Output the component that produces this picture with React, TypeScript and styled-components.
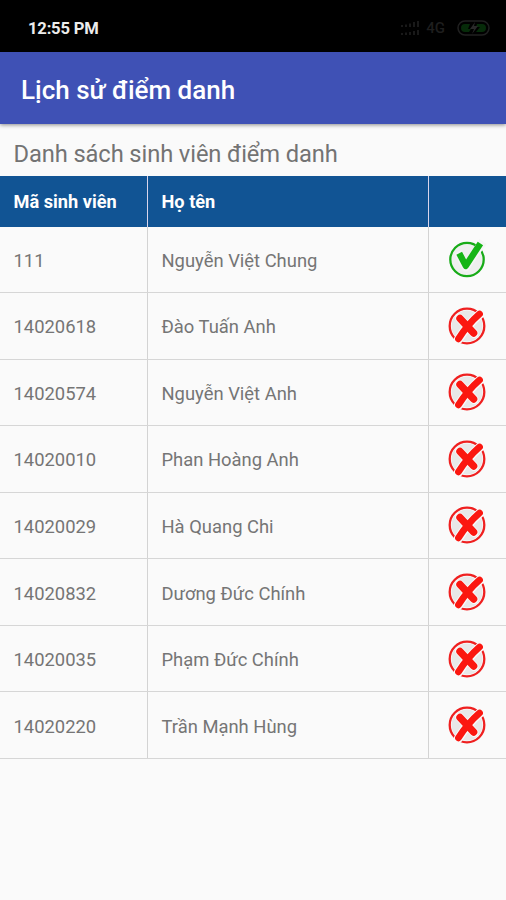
import React from "react";
import styled, { createGlobalStyle } from "styled-components";

const GlobalStyle = createGlobalStyle`
  * { box-sizing: border-box; }
  body {
    margin: 0;
    background: #fafafa;
    font-family: Roboto, "Noto Sans", sans-serif;
  }
`;

const Screen = styled.main`
  width: 100%;
  height: 900px;
  overflow: hidden;
  background: #fafafa;
`;

const StatusBar = styled.header`
  height: 51.5px;
  padding: 5px 15px 0 28px;
  display: flex;
  align-items: center;
  justify-content: space-between;
  background: #000;
`;

const Clock = styled.span`
  color: #ececec;
  font-size: 16.6px;
  font-weight: 700;
  letter-spacing: -0.2px;
`;

const StatusIcons = styled.div`
  display: flex;
  align-items: center;
`;

const Network = styled.span`
  margin: 0 12px 0 5px;
  color: #1e1e1e;
  font-size: 15px;
  font-weight: 500;
`;

const AppBar = styled.div`
  height: 72px;
  padding: 4px 21px 0;
  display: flex;
  align-items: center;
  background: #3f51b5;
  box-shadow: 0 1px 4px rgba(0, 0, 0, 0.45);
`;

const Title = styled.h1`
  margin: 0;
  color: #fff;
  font-size: 26px;
  font-weight: 500;
  white-space: nowrap;
`;

const Caption = styled.h2`
  height: 52.5px;
  margin: 0;
  padding: 9px 13.5px 0;
  display: flex;
  align-items: center;
  color: #737373;
  font-size: 23.7px;
  font-weight: 400;
  letter-spacing: -0.1px;
  white-space: nowrap;
`;

const Row = styled.div<{ $head?: boolean }>`
  height: ${(p) => (p.$head ? "50.5px" : "66.55px")};
  display: grid;
  grid-template-columns: 148px 281px 1fr;
  background: ${(p) => (p.$head ? "#115494" : "transparent")};
  color: ${(p) => (p.$head ? "#fff" : "#757575")};
  font-size: ${(p) => (p.$head ? "18.2px" : "18.4px")};
  font-weight: ${(p) => (p.$head ? 700 : 400)};
  border-bottom: ${(p) => (p.$head ? "none" : "1.5px solid #d6d6d6")};
`;

const Cell = styled.div<{ $center?: boolean; $head?: boolean }>`
  padding: ${(p) => (p.$center ? "0 0.5px 0 0" : p.$head ? "1px 13.5px 0" : "2px 13.5px 0")};
  display: flex;
  align-items: center;
  justify-content: ${(p) => (p.$center ? "center" : "flex-start")};
  white-space: nowrap;
  border-right: ${(p) => (p.$center ? "none" : p.$head ? "1px solid #d9d5ec" : "1px solid #d3d3d3")};
`;

const Mark = styled.svg`
  width: 40px;
  height: 40px;
  display: block;
`;

const Signal = () => (
  <svg width="20" height="16" viewBox="0 0 20 16" stroke="#202020" strokeWidth="1.6">
    <path d="M1 7V5M5 7V4.5M9 7V3.5M13 7V2M17 7V1M1 15v-2M5 15v-2.5M9 15v-3M13 15v-4M17 15V10" />
  </svg>
);

const Battery = () => (
  <svg width="34" height="16" viewBox="0 0 34 16" fill="none">
    <rect x="1" y="1" width="31" height="14" rx="7" stroke="#202020" strokeWidth="1.5" />
    <path d="M8 4h5l-2 5h3l-2 3H8a4 4 0 0 1 0-8ZM20 4h5a4 4 0 0 1 0 8h-6l4-5h-4Z" fill="#062b09" />
    <path d="m18 2-5 7h4l-2 5 6-8h-4Z" fill="#292929" />
  </svg>
);

const Present = () => (
  <Mark viewBox="0 0 40 40" fill="none" strokeLinejoin="round">
    <circle cx="20" cy="20.5" r="15.5" fill="#efefef" />
    <circle cx="20" cy="20.5" r="16.7" stroke="#18ab18" strokeWidth="2.3" />
    <path d="m11 13 7.8 15L36 2.5" stroke="#f5f5f5" strokeWidth="8.5" />
    <path d="m12.2 14.2 6.6 12.6L33.4 4.4" stroke="#16b516" strokeWidth="6.4" />
  </Mark>
);

const Absent = () => (
  <Mark viewBox="0 0 40 40" fill="none" strokeLinecap="round">
    <circle cx="20" cy="20" r="15.5" fill="#e8e8e8" />
    <circle cx="20" cy="20" r="17.3" stroke="#ef2020" strokeWidth="2.3" />
    <path d="M33.5 7.5Q21 18 11.3 33.5M12.5 12 27 27.5" stroke="#fafafa" strokeWidth="9" />
    <path d="M32.5 8Q20.5 18.5 11.5 32.8" stroke="#fb1710" strokeWidth="6.8" />
    <path d="M13 12.5 26.6 27" stroke="#fb1710" strokeWidth="7.4" />
  </Mark>
);

const students = [
  { id: "111", name: "Nguyễn Việt Chung", present: true },
  { id: "14020618", name: "Đào Tuấn Anh", present: false },
  { id: "14020574", name: "Nguyễn Việt Anh", present: false },
  { id: "14020010", name: "Phan Hoàng Anh", present: false },
  { id: "14020029", name: "Hà Quang Chi", present: false },
  { id: "14020832", name: "Dương Đức Chính", present: false },
  { id: "14020035", name: "Phạm Đức Chính", present: false },
  { id: "14020220", name: "Trần Mạnh Hùng", present: false },
];

export default function App() {
  return (
    <Screen>
      <GlobalStyle />
      <StatusBar>
        <Clock>12:55 PM</Clock>
        <StatusIcons>
          <Signal />
          <Network>4G</Network>
          <Battery />
        </StatusIcons>
      </StatusBar>
      <AppBar>
        <Title>Lịch sử điểm danh</Title>
      </AppBar>
      <Caption>Danh sách sinh viên điểm danh</Caption>
      <Row $head>
        <Cell $head>Mã sinh viên</Cell>
        <Cell $head>Họ tên</Cell>
        <Cell $center />
      </Row>
      {students.map((s) => (
        <Row key={s.id}>
          <Cell>{s.id}</Cell>
          <Cell>{s.name}</Cell>
          <Cell $center>{s.present ? <Present /> : <Absent />}</Cell>
        </Row>
      ))}
    </Screen>
  );
}
